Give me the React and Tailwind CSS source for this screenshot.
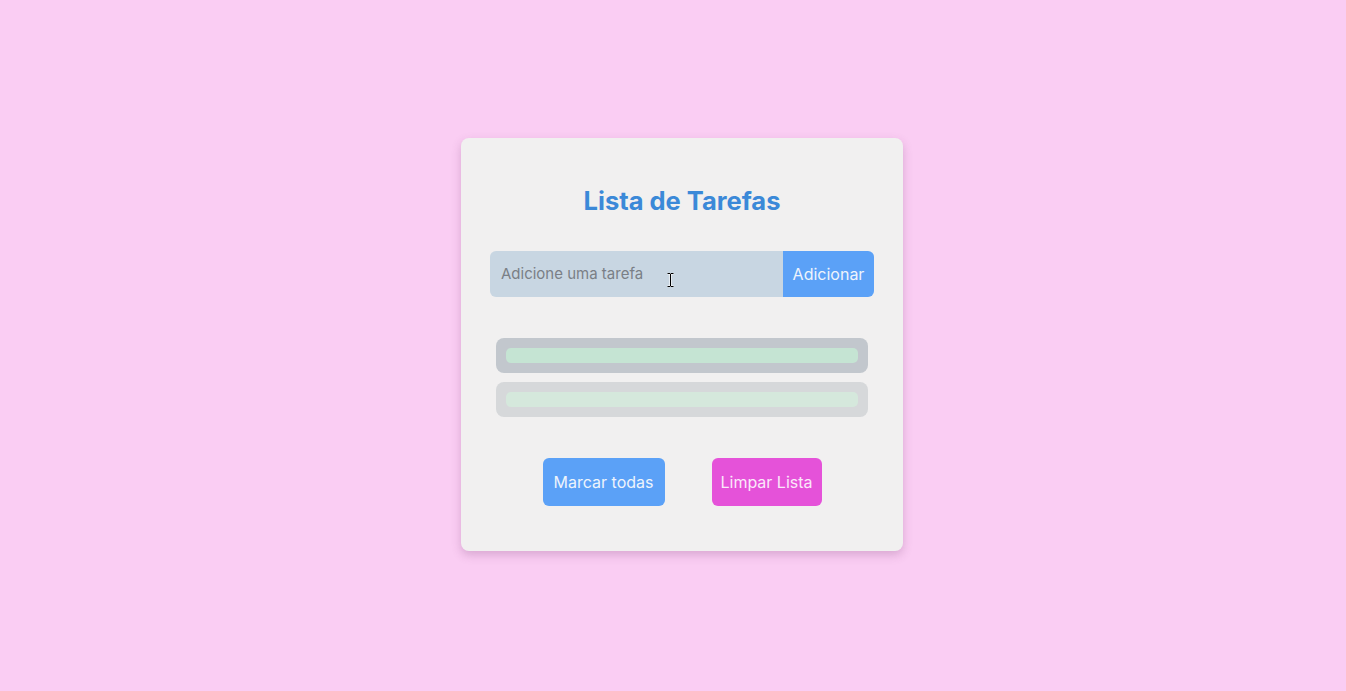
export default function App() {
  const font = { fontFamily: "Inter, 'Open Sans', sans-serif" };
  return (
    <div className="w-full h-[691px] bg-[#facdf3] flex items-center justify-center pl-[18px] pb-[2px]" style={font}>
      <div className="w-[442px] h-[413px] bg-[#f1f0f0] rounded-[8px] shadow-[0_4px_10px_rgba(120,60,110,0.25)] px-[29px] pt-[45px] pb-[45px] flex flex-col">
        <h1 className="text-[25.5px] leading-[36px] font-bold text-[#3b89d8] text-center">Lista de Tarefas</h1>
        <div className="mt-[32px] flex h-[46px]">
          <div className="relative flex-1 bg-[#c8d6e2] rounded-l-[6px] flex items-center pl-[11px]">
            <span className="text-[15px] text-[#7a7f86]">Adicione uma tarefa</span>
            <svg className="absolute left-[177px] top-[22px]" width="7" height="14" viewBox="0 0 7 14">
              <path d="M0.5 0.5h2.5v0.5M4 1v-0.5h2.5M3.5 1v12M0.5 13.5h2.5v-0.5M4 13v0.5h2.5" stroke="#fff" strokeWidth="2" fill="none" />
              <path d="M0.5 0.5h2.5v0.5M4 1v-0.5h2.5M3.5 1v12M0.5 13.5h2.5v-0.5M4 13v0.5h2.5" stroke="#000" strokeWidth="1" fill="none" />
            </svg>
          </div>
          <button className="w-[91px] bg-[#5ba1f7] rounded-r-[6px] text-[16px] text-[#eef4fc]">Adicionar</button>
        </div>
        <div className="mt-[41px] mx-[6px] flex flex-col gap-[9px]">
          <div className="h-[35px] bg-[#c2c7cd] rounded-[8px] p-[10px]">
            <div className="h-full bg-[#c5e4d3] rounded-[5px]" />
          </div>
          <div className="h-[35px] bg-[#d6d8da] rounded-[8px] p-[10px]">
            <div className="h-full bg-[#d5e8dc] rounded-[5px]" />
          </div>
        </div>
        <div className="mt-[41px] flex justify-center gap-[47px]">
          <button className="h-[48px] w-[122px] bg-[#5ba1f7] rounded-[6px] text-[16px] text-[#eef4fc]">Marcar todas</button>
          <button className="h-[48px] w-[110px] bg-[#e552d9] rounded-[6px] text-[16px] text-[#fbe8f9]">Limpar Lista</button>
        </div>
      </div>
    </div>
  );
}
